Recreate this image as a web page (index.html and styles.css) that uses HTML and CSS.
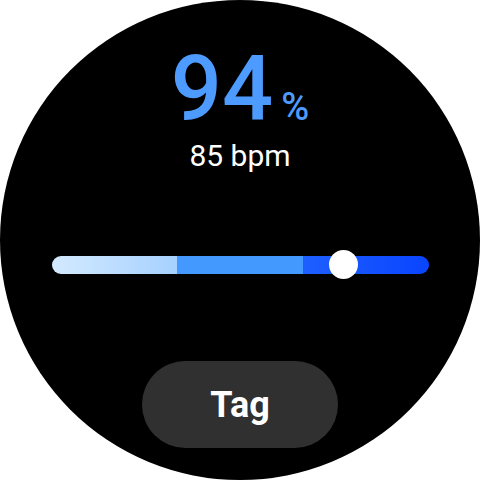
FILE: index.html
```html
<!DOCTYPE html>
<html lang="en">
<head>
  <meta charset="UTF-8" />
  <title>SpO2</title>
  <link rel="stylesheet" href="styles.css">
</head>
<body>
  <div class="watch">
    <div class="reading">
      <span class="value">94</span><span class="unit">%</span>
    </div>
    <div class="pulse">85 bpm</div>

    <div class="scale">
      <div class="seg seg-low"></div>
      <div class="seg seg-mid"></div>
      <div class="seg seg-high"></div>
      <div class="thumb"></div>
    </div>

    <button class="tag-btn">Tag</button>
  </div>
</body>
</html>
```

FILE: styles.css
```css
body {
  margin: 0;
  background: #ffffff;
  font-family: 'Roboto', 'Inter', sans-serif;
}

.watch {
  width: 480px;
  height: 480px;
  border-radius: 50%;
  background: #000000;
  display: flex;
  flex-direction: column;
  align-items: center;
  color: #ffffff;
}

.reading {
  margin-top: 45px;
  height: 90px;
  display: flex;
  align-items: baseline;
  color: #4d9bff;
}

.value {
  font-size: 90px;
  font-weight: 500;
  line-height: 90px;
}

.unit {
  font-size: 38px;
  font-weight: 500;
  margin-left: 8px;
}

.pulse {
  margin-top: 4px;
  font-size: 30px;
  line-height: 34px;
}

.scale {
  position: relative;
  margin-top: 83px;
  width: 377px;
  height: 18px;
  display: flex;
  border-radius: 9px;
}

.seg {
  flex: 1;
}

.seg-low {
  background: linear-gradient(to right, #d3eaff, #a6d1ff);
  border-radius: 9px 0 0 9px;
}

.seg-mid {
  background: #4499ff;
}

.seg-high {
  background: linear-gradient(to right, #1e5fff, #0a45ff);
  border-radius: 0 9px 9px 0;
}

.thumb {
  position: absolute;
  left: 277px;
  top: -6px;
  width: 29px;
  height: 29px;
  border-radius: 50%;
  background: #ffffff;
}

.tag-btn {
  margin-top: 87px;
  width: 196px;
  height: 87px;
  border: none;
  border-radius: 44px;
  background: #303030;
  color: #ffffff;
  font-family: inherit;
  font-size: 36px;
  font-weight: 700;
}
```
